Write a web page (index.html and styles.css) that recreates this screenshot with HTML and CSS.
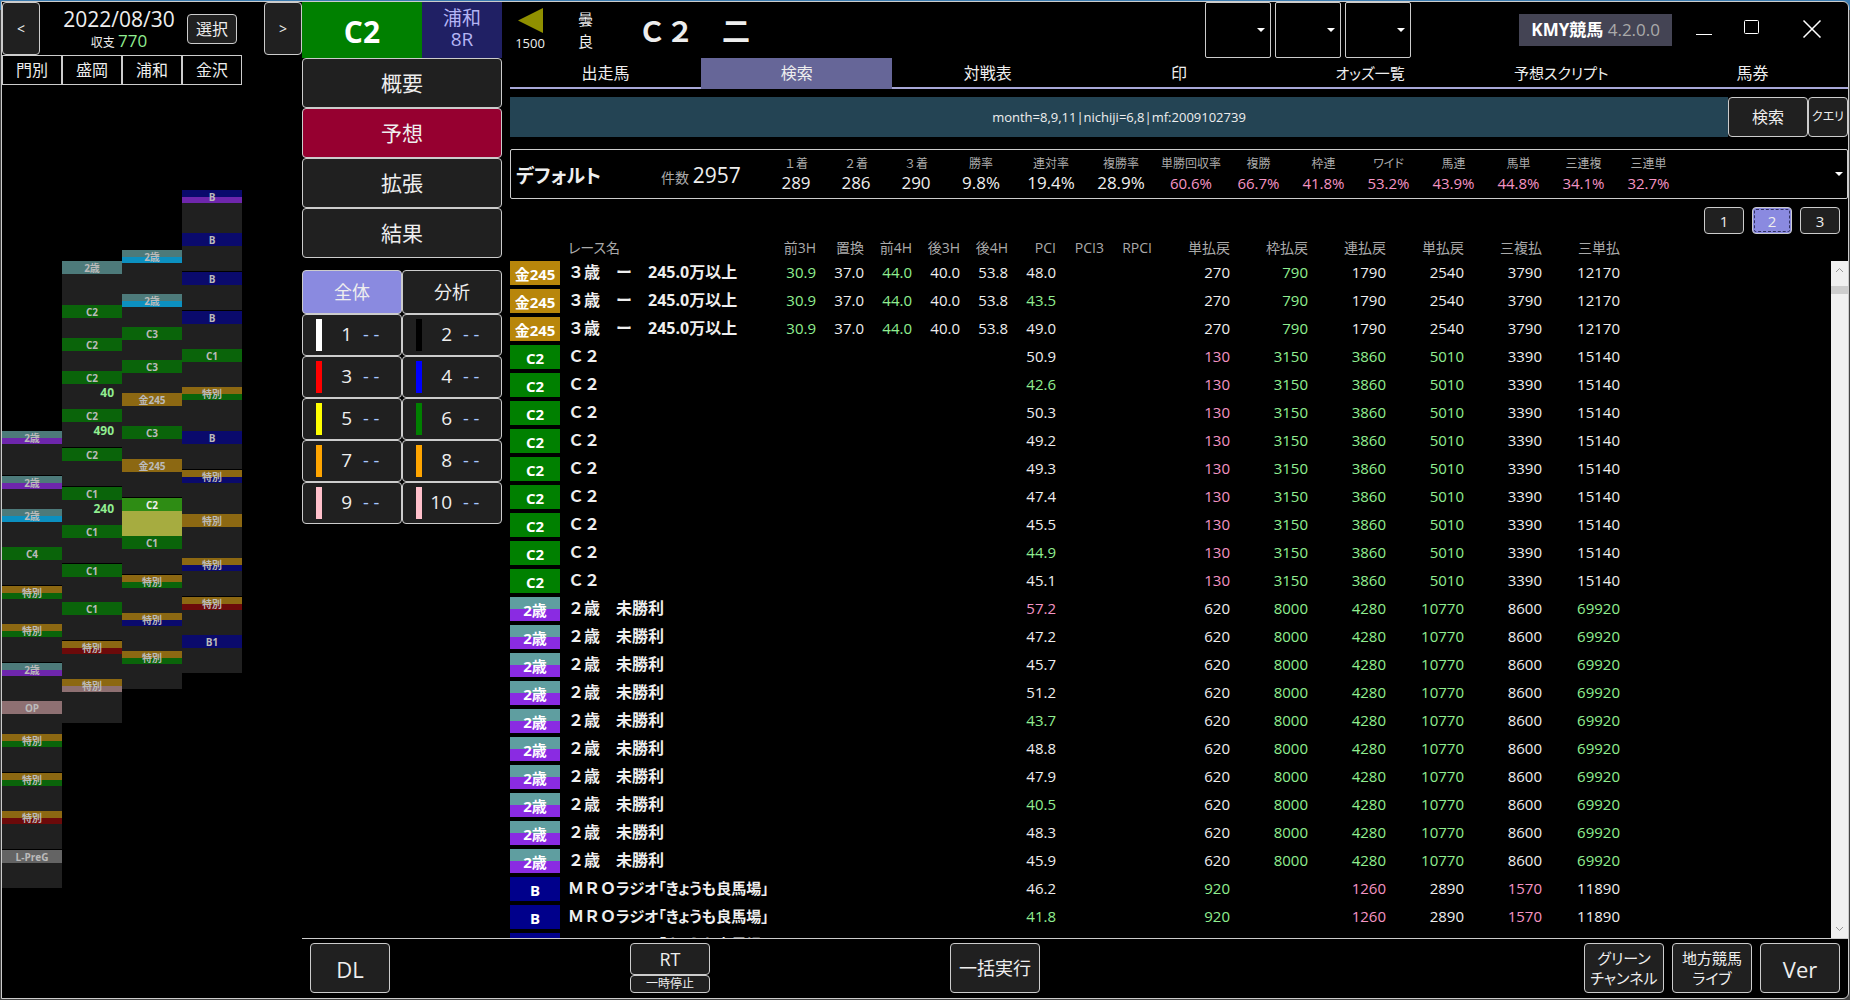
FILE: index.html
```html
<!DOCTYPE html>
<html lang="ja">
  <head>
    <meta charset="utf-8">
    <meta name="viewport" content="width=device-width, initial-scale=1">
    <title>KMY競馬</title>
    <link rel="stylesheet" href="styles.css">
  </head>

  <body>
    <div class="window">
      <aside class="schedule">
        <div class="day-bar">
          <button class="btn day-move">&lt;</button>
          <div class="day">
            <div class="day-info">
              <div class="day-date">2022/08/30</div>
              <div class="day-balance">収支 <span class="good">770</span></div>
            </div>
            <button class="btn day-select">選択</button>
          </div>
          <button class="btn day-move">&gt;</button>
        </div>
        <div class="courses">
          <div>門別</div>
          <div>盛岡</div>
          <div>浦和</div>
          <div>金沢</div>
        </div>
        <div class="timeline" id="timeline"></div>
      </aside>

      <div class="content">
        <div class="panels">
          <nav class="menu">
            <div class="race-id">
              <div class="race-class">C2</div>
              <div class="race-place">浦和<br>8R</div>
            </div>
            <button class="btn menu-btn">概要</button>
            <button class="btn menu-btn current">予想</button>
            <button class="btn menu-btn">拡張</button>
            <button class="btn menu-btn">結果</button>
            <div class="horses" id="horses">
              <button class="btn scope active">全体</button>
              <button class="btn scope">分析</button>
            </div>
          </nav>

          <main class="race">
            <header class="race-head">
              <div class="distance">
                <svg width="25" height="25" viewBox="0 0 25 25"><path d="M0 12.5 25 0v25z" fill="#909000"/></svg>
                <span>1500</span>
              </div>
              <div class="weather"><span>曇</span><span>良</span></div>
              <h1>Ｃ２　二</h1>
              <div class="marks">
                <select aria-label="印1"><option></option></select>
                <select aria-label="印2"><option></option></select>
                <select aria-label="印3"><option></option></select>
              </div>
              <div class="app-name"><b>KMY競馬</b> 4.2.0.0</div>
              <div class="window-buttons">
                <button aria-label="最小化"><svg width="20" height="20" viewBox="0 0 20 20"><path d="M2 16.5h16"/></svg></button>
                <button aria-label="最大化"><svg width="20" height="20" viewBox="0 0 20 20"><rect x="2.5" y="2.5" width="14" height="13" rx="1"/></svg></button>
                <button aria-label="閉じる" class="close"><svg width="20" height="20" viewBox="0 0 20 20"><path d="M1.5 2.500l17 17M18.500 2.500l-17 17" stroke-width="1.500"/></svg></button>
              </div>
            </header>

            <div class="tabs" role="tablist">
              <button role="tab">出走馬</button>
              <button role="tab" aria-selected="true" class="selected">検索</button>
              <button role="tab">対戦表</button>
              <button role="tab">印</button>
              <button role="tab" class="kana">オッズ一覧</button>
              <button role="tab" class="kana">予想スクリプト</button>
              <button role="tab">馬券</button>
            </div>

            <form class="search" onsubmit="return false">
              <input type="text" aria-label="検索条件" value="month=8,9,11|nichiji=6,8|mf:2009102739">
              <button class="btn search-btn">検索</button>
              <button class="btn query-btn kana" type="button">クエリ</button>
            </form>

            <button class="summary" aria-haspopup="listbox">
              <span class="summary-name kana">デフォルト</span>
              <span class="summary-count">件数 <span>2957</span></span>
              <span class="stats" id="stats"></span>
              <span class="arrow"></span>
            </button>

            <div class="pages">
              <button class="btn">1</button>
              <button class="btn active focused">2</button>
              <button class="btn">3</button>
            </div>

            <div class="results">
              <div class="results-view">
                <table>
                  <colgroup>
                    <col class="col-badge"><col class="col-name">
                    <col class="col-time" span="8">
                    <col class="col-pay" span="6">
                    <col>
                  </colgroup>
                  <thead>
                    <tr>
                      <th></th><th class="name kana">レース名</th>
                      <th>前3H</th><th>置換</th><th>前4H</th><th>後3H</th><th>後4H</th>
                      <th>PCI</th><th>PCI3</th><th>RPCI</th>
                      <th>単払戻</th><th>枠払戻</th><th>連払戻</th><th>単払戻</th><th>三複払</th><th>三単払</th>
                      <th></th>
                    </tr>
                  </thead>
                  <tbody id="rows"></tbody>
                </table>
              </div>
              <div class="scrollbar">
                <svg width="9" height="6" viewBox="0 0 9 6"><path d="M1 5l3.500-3.500L8 5"/></svg>
                <div class="thumb"></div>
                <svg class="down" width="9" height="6" viewBox="0 0 9 6"><path d="M1 1l3.500 3.500L8 1"/></svg>
              </div>
            </div>
          </main>
        </div>

        <footer class="commands">
          <button class="btn large">DL</button>
          <div class="rt">
            <button class="btn rt-main">RT</button>
            <button class="btn rt-pause">一時停止</button>
          </div>
          <button class="btn batch">一括実行</button>
          <div class="links">
            <button class="btn kana">グリーン<br>チャンネル</button>
            <button class="btn kana">地方競馬<br>ライブ</button>
            <button class="btn large">Ver</button>
          </div>
        </footer>
      </div>
    </div>
    <script src="script.js"></script>
  </body>
</html>
```

FILE: styles.css
```css
* {
  box-sizing: border-box;
}
body {
  margin: 0;
  height: 100vh;
  padding: 1px;
  background: linear-gradient(#3c7cb0 0, #3c7cb0 10px, #444 10px);
  color: #eee;
  font-family: "Open Sans", "Noto Sans CJK JP", sans-serif;
  font-size: 16px;
  line-height: 20px;
}
button, input, select {
  margin: 0;
  padding: 0;
  color: inherit;
  font: inherit;
}
.kana {
  font-feature-settings: "palt";
}
.good {
  color: #90ee90;
}
.bad {
  color: #f494c4;
}
.btn {
  border: 1px solid #ccc;
  border-radius: 4px;
  background: #202020;
}
.btn.active {
  background: #8a8ae0;
}
.window {
  display: flex;
  height: 100%;
  border: 1px solid #ccc;
  border-radius: 0 6px 6px 0;
  background: #000;
  overflow: hidden;
}

/* schedule */
.schedule {
  flex: none;
  width: 300px;
}
.day-bar {
  display: flex;
  height: 53px;
}
.day-move {
  width: 38px;
  font-size: 14px;
}
.day {
  flex: 1;
  display: flex;
  align-items: center;
  gap: 11px;
  padding-left: 22px;
}
.day-info {
  width: 114px;
  text-align: center;
}
.day-date {
  font-size: 21px;
  line-height: 26px;
}
.day-balance {
  font-size: 12px;
  line-height: 18px;
}
.day-balance .good {
  font-size: 17px;
}
.day-select {
  width: 50px;
  height: 30px;
}
.courses {
  display: flex;
}
.courses div {
  width: 60px;
  height: 30px;
  border: 1px solid #ccc;
  line-height: 28px;
  text-align: center;
}
.timeline {
  display: flex;
}
.course {
  width: 60px;
}
.slot {
  background: #202020;
  text-align: center;
  overflow: hidden;
}
.slot.gap {
  border-bottom: 1px solid #000;
}
.slot-label {
  height: 13px;
  color: #bbb;
  font-size: 10px;
  font-weight: bold;
  line-height: 15px;
}
.slot-pay {
  padding-right: 8px;
  font-size: 12px;
  font-weight: bold;
  line-height: 18px;
  text-align: right;
}
.slot .teal { background: #4d7a7a; }
.slot .teal-purple { background: linear-gradient(#4d7a7a 7px, #6e26ac 7px); }
.slot .teal-blue { background: linear-gradient(#4d7a7a 7px, #0c90c0 7px); }
.slot .green { background: #0a640a; }
.slot .navy { background: #0a0a6c; }
.slot .navy-purple { background: linear-gradient(#0a0a6c 7px, #6e26ac 7px); }
.slot .gold { background: #8c6812; }
.slot .gold-green { background: linear-gradient(#8c6812 7px, #0a640a 7px); }
.slot .gold-navy { background: linear-gradient(#8c6812 7px, #0a0a6c 7px); }
.slot .gold-red { background: linear-gradient(#8c6812 7px, #6c0a0a 7px); }
.slot .gold-pink { background: linear-gradient(#8c6812 7px, #8e7072 7px); }
.slot .pink { background: #8e7072; }
.slot .grey { background: #646464; }
.slot.selected {
  background: #a6ac40;
}
.slot.selected .slot-label {
  background: #2e8c14;
  color: #eee;
}

/* race panel */
.content {
  flex: 1;
  min-width: 0;
  display: flex;
  flex-direction: column;
}
.panels {
  flex: 1;
  min-height: 0;
  display: flex;
  gap: 8px;
}
.menu {
  flex: none;
  width: 200px;
}
.race-id {
  display: flex;
  height: 56px;
  text-align: center;
}
.race-class {
  flex: 3;
  background: #008000;
  color: #fff;
  font-size: 30px;
  font-weight: bold;
  line-height: 60px;
}
.race-place {
  flex: 2;
  padding-top: 6px;
  background: #202064;
  color: #b4b4f4;
  font-size: 19px;
  line-height: 21px;
}
.menu-btn {
  display: block;
  width: 100%;
  height: 50px;
  font-size: 21px;
}
.menu-btn.current {
  background: #960030;
}
.horses {
  display: grid;
  grid-template-columns: 1fr 1fr;
  margin-top: 12px;
}
.scope {
  height: 44px;
  font-size: 18px;
}
.horse {
  display: flex;
  align-items: center;
  height: 42px;
  padding-left: 13px;
  font-size: 19px;
}
.frame {
  width: 6px;
  height: 32px;
}
.horse-number {
  width: 30px;
  padding-bottom: 2px;
  text-align: right;
}
.horse-mark {
  padding: 0 0 2px 11px;
  color: #a8c8ff;
  font-size: 18px;
}
.race {
  flex: 1;
  min-width: 0;
  display: flex;
  flex-direction: column;
}
.race-head {
  display: flex;
  height: 56px;
}
.distance {
  display: flex;
  flex-direction: column;
  align-items: center;
  width: 40px;
  padding-top: 6px;
  font-size: 13px;
}
.distance svg {
  flex: none;
}
.weather {
  display: flex;
  flex-direction: column;
  width: 72px;
  padding: 6px 0 0 28px;
  font-size: 15px;
  line-height: 22px;
}
h1 {
  margin: 0 auto 0 16px;
  font-size: 28px;
  line-height: 58px;
}
.marks {
  display: flex;
  gap: 4px;
}
.marks select {
  width: 66px;
  border: 1px solid #ccc;
  border-radius: 2px;
  appearance: none;
  background: #000 url("data:image/svg+xml,%3Csvg xmlns='http://www.w3.org/2000/svg' width='8' height='4'%3E%3Cpath d='M0 0h8L4 4z' fill='white'/%3E%3C/svg%3E") no-repeat right 5px center;
}
.app-name {
  height: 32px;
  margin: 12px 22px 0 108px;
  padding: 0 12px;
  background: #444454;
  color: #aaa;
  font-size: 17px;
  line-height: 32px;
}
.app-name b {
  color: #fff;
}
.window-buttons {
  display: flex;
  gap: 28px;
  padding: 16px 14px 0 0;
}
.window-buttons button {
  width: 20px;
  height: 20px;
  border: 0;
  background: none;
}
.window-buttons .close {
  width: 44px;
}
.window-buttons svg {
  display: block;
  margin: auto;
  fill: none;
  stroke: #fff;
}
.tabs {
  display: flex;
  height: 31px;
}
.tabs button {
  flex: 1;
  border: 0;
  border-bottom: 2px solid #a8a8d8;
  background: none;
}
.tabs .selected {
  border-color: #666698;
  background: #666698;
}
.tabs .kana {
  font-size: 15px;
}
.search {
  display: flex;
  height: 40px;
  margin: 8px 0 12px;
}
.search input {
  flex: 1;
  border: 0;
  background: #244454;
  font-size: 13px;
  text-align: center;
}
.search-btn {
  width: 80px;
}
.query-btn {
  width: 40px;
  font-size: 12px;
}
.summary {
  display: flex;
  align-items: center;
  height: 50px;
  padding: 0 4px 0 5px;
  border: 1px solid #ccc;
  border-radius: 2px;
  background: none;
  text-align: left;
}
.summary-name {
  width: 145px;
  padding-top: 4px;
  font-size: 19px;
  font-weight: bold;
}
.summary-count {
  width: 105px;
  padding-top: 4px;
  color: #aaa;
  font-size: 14px;
}
.summary-count span {
  color: #eee;
  font-size: 21px;
}
.stats {
  display: flex;
  padding-bottom: 2px;
  text-align: center;
}
.stat {
  width: 65px;
  color: #aaa;
  font-size: 12px;
}
.stat.rank {
  width: 60px;
}
.stat.rate {
  width: 70px;
}
.stat span {
  display: block;
  font-size: 15px;
  line-height: 18px;
}
.stat .total {
  color: #eee;
  font-size: 17px;
}
.arrow {
  margin-left: auto;
  border: 4px solid transparent;
  border-top-color: #fff;
  border-bottom: 0;
}
.pages {
  display: flex;
  justify-content: flex-end;
  gap: 8px;
  margin-top: 8px;
  padding-right: 8px;
}
.pages .btn {
  width: 40px;
  height: 27px;
  font-size: 15px;
}
.pages .focused {
  outline: 1px dashed #303060;
  outline-offset: -3px;
}

/* search results */
.results {
  flex: 1;
  min-height: 0;
  display: flex;
}
.results-view {
  flex: 1;
  overflow: hidden;
}
table {
  width: 100%;
  table-layout: fixed;
  border-collapse: collapse;
  font-size: 15px;
}
.col-badge {
  width: 58px;
}
.col-name {
  width: 200px;
}
.col-time {
  width: 48px;
}
.col-pay {
  width: 78px;
}
th {
  height: 25px;
  padding: 3px 0 0;
  color: #aaa;
  font-size: 14px;
  font-weight: normal;
  text-align: right;
  white-space: nowrap;
}
td {
  height: 28px;
  padding: 0 0 2px;
  text-align: right;
}
td:first-child {
  padding: 0;
}
.name {
  overflow: hidden;
  text-align: left;
  white-space: nowrap;
}
td.name {
  font-size: 16px;
  font-weight: bold;
}
td.name .kana {
  font-size: 15px;
}
.badge {
  width: 50px;
  height: 24px;
  color: #fff;
  font-weight: bold;
  line-height: 26px;
  text-align: center;
}
.badge.gold { background: #b8860b; }
.badge.green { background: #008000; }
.badge.teal-purple { background: linear-gradient(#5f9ea0 50%, #8a2be2 50%); }
.badge.navy { background: #00008b; }
.scrollbar {
  display: flex;
  flex-direction: column;
  align-items: center;
  gap: 13px;
  width: 17px;
  margin-top: 27px;
  padding: 6px 0;
  background: #f0f0f0;
}
.scrollbar svg {
  fill: none;
  stroke: #999;
}
.scrollbar .down {
  margin-top: auto;
}
.thumb {
  width: 17px;
  height: 8px;
  background: #cdcdcd;
}

/* footer */
.commands {
  display: flex;
  gap: 240px;
  height: 60px;
  padding: 4px 8px 5px;
  border-top: 1px solid #ccc;
}
.commands .btn {
  width: 80px;
  height: 50px;
  font-size: 15px;
}
.commands .large {
  padding-top: 2px;
  font-size: 22px;
}
.rt {
  display: flex;
  flex-direction: column;
}
.commands .rt-main {
  height: 32px;
  font-size: 18px;
}
.commands .rt-pause {
  height: 18px;
  font-size: 12px;
  line-height: 16px;
}
.commands .batch {
  width: 90px;
  font-size: 18px;
}
.links {
  display: flex;
  gap: 8px;
  margin-left: auto;
}
```

FILE: script.js
```javascript
// top: px before the first race
// races: [label, class, height, gap after, pay]
const courses = [
  { top: 346, races: [
    ['2歳', 'teal-purple', 45, 1], ['2歳', 'teal-purple', 33], ['2歳', 'teal-blue', 38],
    ['C4', 'green', 39, 1], ['特別', 'gold-green', 38], ['特別', 'gold-green', 39, 1],
    ['2歳', 'teal-purple', 38], ['OP', 'pink', 33], ['特別', 'gold-green', 39, 1],
    ['特別', 'gold-green', 38], ['特別', 'gold-red', 39, 1], ['L-PreG', 'grey', 38],
  ] },
  { top: 176, races: [
    ['2歳', 'teal', 44], ['C2', 'green', 33], ['C2', 'green', 33],
    ['C2', 'green', 38, 0, 40], ['C2', 'green', 39, 1, 490], ['C2', 'green', 39, 1],
    ['C1', 'green', 38, 0, 240], ['C1', 'green', 39, 1], ['C1', 'green', 38],
    ['C1', 'green', 39, 1], ['特別', 'gold-red', 38], ['特別', 'gold-pink', 44],
  ] },
  { top: 165, races: [
    ['2歳', 'teal-blue', 44], ['2歳', 'teal-blue', 33], ['C3', 'green', 33],
    ['C3', 'green', 33], ['金245', 'gold', 33], ['C3', 'green', 33],
    ['金245', 'gold', 39, 1], ['C2', 'selected', 38], ['C1', 'green', 39, 1],
    ['特別', 'gold-green', 38], ['特別', 'gold-navy', 38], ['特別', 'gold-green', 38],
  ] },
  { top: 105, races: [
    ['B', 'navy-purple', 43], ['B', 'navy', 39, 1], ['B', 'navy', 39, 1],
    ['B', 'navy', 38], ['C1', 'green', 38], ['特別', 'gold-green', 44],
    ['B', 'navy', 39, 1], ['特別', 'gold-navy', 44], ['特別', 'gold', 44],
    ['特別', 'gold-navy', 39, 1], ['特別', 'gold-red', 38], ['B1', 'navy', 38],
  ] },
];

document.getElementById('timeline').innerHTML = courses.map(course => `
  <div class="course" style="padding-top: ${course.top}px">
    ${course.races.map(([label, kind, height, gap, pay]) => `
      <div class="slot ${kind === 'selected' ? kind : ''} ${gap ? 'gap' : ''}" style="height: ${height}px">
        <div class="slot-label ${kind}">${label}</div>
        ${pay ? `<div class="slot-pay good">${pay}</div>` : ''}
      </div>`).join('')}
  </div>`).join('');

const frames = ['white', 'black', 'red', 'blue', 'yellow', 'green', 'orange', 'orange', 'pink', 'pink'];

document.getElementById('horses').innerHTML += frames.map((color, i) => `
  <button class="btn horse">
    <span class="frame" style="background: ${color}"></span>
    <span class="horse-number">${i + 1}</span>
    <span class="horse-mark">- -</span>
  </button>`).join('');

const stats = [
  ['１着', '289', 'rank'], ['２着', '286', 'rank'], ['３着', '290', 'rank'],
  ['勝率', '9.8%', 'rate'], ['連対率', '19.4%', 'rate'], ['複勝率', '28.9%', 'rate'],
  ['単勝回収率', '60.6%', 'rate'], ['複勝', '66.7%', ''], ['枠連', '41.8%', ''],
  ['ワイド', '53.2%', 'kana'], ['馬連', '43.9%', ''], ['馬単', '44.8%', ''],
  ['三連複', '34.1%', ''], ['三連単', '32.7%', ''],
];

document.getElementById('stats').innerHTML = stats.map(([label, value, kind], i) =>
  `<span class="stat ${kind}">${label}<span class="${i < 6 ? 'total' : 'bad'}">${value}</span></span>`
).join('');

// + is drawn green, - is drawn pink
const groups = [
  {
    badge: '金245', kind: 'gold', name: '３歳　ー　245.0万以上',
    times: ['+30.9', '37.0', '+44.0', '40.0', '53.8'],
    pci: ['48.0', '+43.5', '49.0'],
    pays: ['270', '+790', '1790', '2540', '3790', '12170'],
  },
  {
    badge: 'C2', kind: 'green', name: 'Ｃ２',
    times: ['', '', '', '', ''],
    pci: ['50.9', '+42.6', '50.3', '49.2', '49.3', '47.4', '45.5', '+44.9', '45.1'],
    pays: ['-130', '+3150', '+3860', '+5010', '3390', '15140'],
  },
  {
    badge: '2歳', kind: 'teal-purple', name: '２歳　未勝利',
    times: ['', '', '', '', ''],
    pci: ['-57.2', '47.2', '45.7', '51.2', '+43.7', '48.8', '47.9', '+40.5', '48.3', '45.9'],
    pays: ['620', '+8000', '+4280', '+10770', '8600', '+69920'],
  },
  {
    badge: 'B', kind: 'navy', name: 'ＭＲＯ<span class="kana">ラジオ「きょうも良馬場」杯</span>',
    times: ['', '', '', '', ''],
    pci: ['46.2', '+41.8', '44.6'],
    pays: ['+920', '', '-1260', '2890', '-1570', '11890'],
  },
];

function cell(value) {
  const color = { '+': 'good', '-': 'bad' }[value[0]];
  return color ? `<td class="${color}">${value.slice(1)}</td>` : `<td>${value}</td>`;
}

document.getElementById('rows').innerHTML = groups.map(group => group.pci.map(pci => `
  <tr>
    <td><div class="badge ${group.kind}">${group.badge}</div></td>
    <td class="name">${group.name}</td>
    ${[...group.times, pci, '', '', ...group.pays].map(cell).join('')}
    <td></td>
  </tr>`).join('')).join('');
```
